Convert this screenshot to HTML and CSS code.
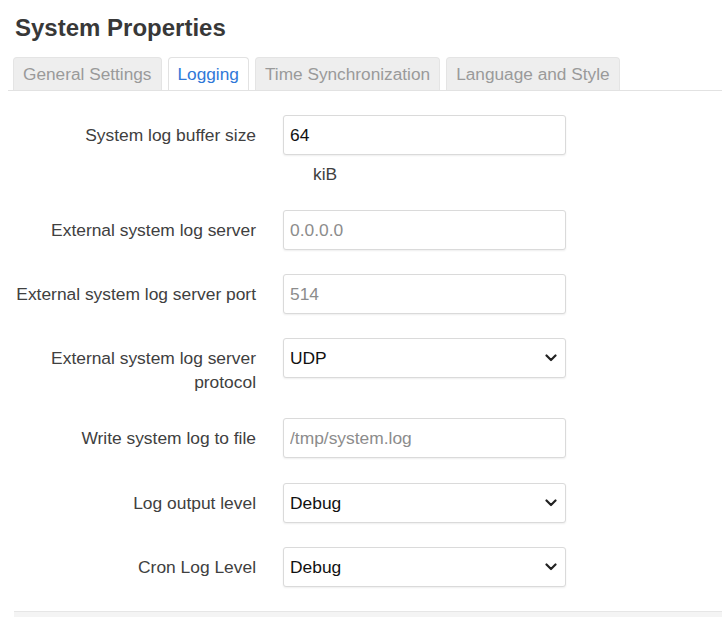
FILE: index.html
```html
<!DOCTYPE html>
<html lang="en">
<head>
<meta charset="utf-8">
<title>System Properties</title>
<link rel="stylesheet" href="styles.css">
</head>
<body>
<div class="page">
  <h2 class="title">System Properties</h2>
  <ul class="tabs">
    <li class="tab">General Settings</li>
    <li class="tab active">Logging</li>
    <li class="tab">Time Synchronization</li>
    <li class="tab">Language and Style</li>
  </ul>
  <div class="form">
    <div class="row">
      <label class="label">System log buffer size</label>
      <div class="field">
        <input class="input" type="text" value="64">
        <div class="unit">kiB</div>
      </div>
    </div>
    <div class="row">
      <label class="label">External system log server</label>
      <div class="field"><input class="input" type="text" placeholder="0.0.0.0"></div>
    </div>
    <div class="row">
      <label class="label">External system log server port</label>
      <div class="field"><input class="input" type="text" placeholder="514"></div>
    </div>
    <div class="row">
      <label class="label">External system log server protocol</label>
      <div class="field">
        <div class="select-wrap">
          <select class="select"><option>UDP</option><option>TCP</option></select>
          <svg class="chev" width="12" height="8" viewBox="0 0 12 8"><path d="M1.5 1.5 L6 6 L10.5 1.5" fill="none" stroke="#222" stroke-width="2.2" stroke-linecap="round" stroke-linejoin="round"/></svg>
        </div>
      </div>
    </div>
    <div class="row row-loose">
      <label class="label">Write system log to file</label>
      <div class="field"><input class="input" type="text" placeholder="/tmp/system.log"></div>
    </div>
    <div class="row">
      <label class="label">Log output level</label>
      <div class="field">
        <div class="select-wrap">
          <select class="select"><option>Debug</option><option>Info</option></select>
          <svg class="chev" width="12" height="8" viewBox="0 0 12 8"><path d="M1.5 1.5 L6 6 L10.5 1.5" fill="none" stroke="#222" stroke-width="2.2" stroke-linecap="round" stroke-linejoin="round"/></svg>
        </div>
      </div>
    </div>
    <div class="row">
      <label class="label">Cron Log Level</label>
      <div class="field">
        <div class="select-wrap">
          <select class="select"><option>Debug</option><option>Normal</option></select>
          <svg class="chev" width="12" height="8" viewBox="0 0 12 8"><path d="M1.5 1.5 L6 6 L10.5 1.5" fill="none" stroke="#222" stroke-width="2.2" stroke-linecap="round" stroke-linejoin="round"/></svg>
        </div>
      </div>
    </div>
  </div>
  <div class="footer-bar"></div>
</div>
</body>
</html>
```

FILE: styles.css
```css
* { box-sizing: border-box; }
html, body {
  margin: 0;
  padding: 0;
  background: #fff;
  font-family: "Liberation Sans", Arial, sans-serif;
  color: #404040;
  overflow: hidden;
}
.page {
  padding-left: 8px;
}
.title {
  margin: 0;
  padding: 13px 0 0 7px;
  font-size: 24px;
  line-height: 30px;
  font-weight: bold;
  color: #383838;
}
.tabs {
  list-style: none;
  margin: 14px 0 0 0;
  padding: 0 0 0 5px;
  display: flex;
  border-bottom: 1px solid #e2e2e2;
}
.tab {
  height: 33px;
  line-height: 32px;
  padding: 0 9px 0 9px;
  margin-right: 6px;
  font-size: 17.25px;
  color: #9a9a9a;
  background: #eeeeee;
  border: 1px solid #e4e4e4;
  border-bottom: none;
  border-radius: 4px 4px 0 0;
}
.tab.active {
  background: #fff;
  color: #2f78d8;
  border-color: #e2e2e2;
}
.form {
  padding: 24px 0 0 6px;
}
.row {
  display: grid;
  grid-template-columns: 242px 283px;
  column-gap: 27px;
  margin-bottom: 24px;
}
.row-loose {
  margin-bottom: 25px;
}
.label {
  text-align: right;
  padding-top: 8px;
  font-size: 17.4px;
  line-height: 24px;
  color: #404040;
}
.field {
  display: flex;
  flex-direction: column;
}
.input, .select {
  width: 283px;
  height: 40px;
  padding: 0 8px 0 6px;
  border: 1px solid #dadada;
  border-radius: 3px;
  box-shadow: 0 1px 2px rgba(0, 0, 0, 0.07);
  background: #fff;
  font-family: "Liberation Sans", Arial, sans-serif;
  font-size: 17.4px;
  color: #111;
  outline: none;
}
.input::placeholder {
  color: #8c8c8c;
  opacity: 1;
}
.unit {
  margin-top: 7px;
  padding-left: 30px;
  font-size: 17.4px;
  line-height: 24px;
  color: #404040;
}
.select-wrap {
  position: relative;
  width: 283px;
  height: 40px;
}
.select {
  appearance: none;
  -webkit-appearance: none;
  display: block;
}
.chev {
  position: absolute;
  right: 9px;
  top: 16px;
  pointer-events: none;
}
.footer-bar {
  margin-left: 6px;
  height: 6px;
  background: #f4f4f4;
  border-top: 1px solid #e6e6e6;
}
```
